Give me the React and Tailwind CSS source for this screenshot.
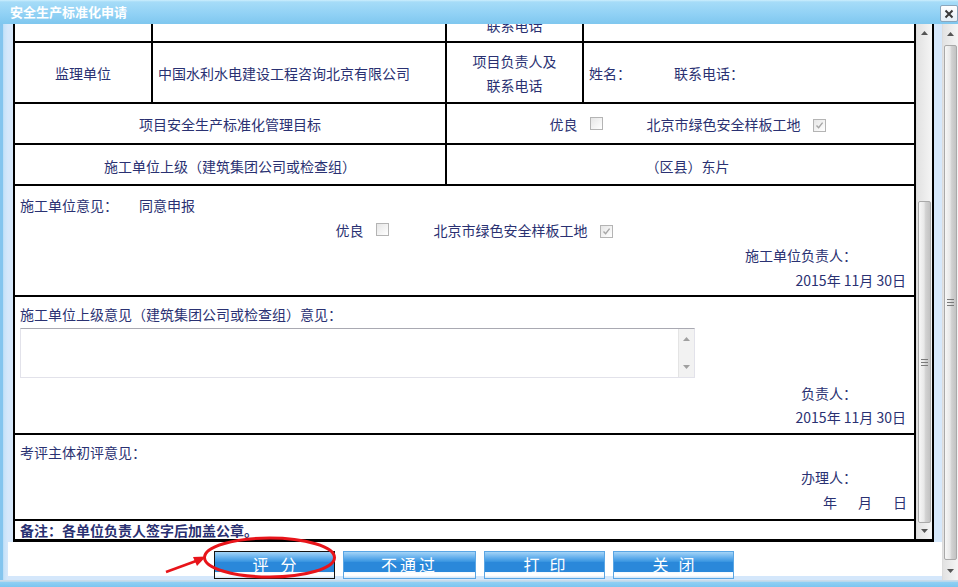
import React from 'react';

const ink = 'text-[#2a3172]';

function Checkbox({ checked }) {
  return (
    <span className="inline-flex w-[13px] h-[13px] border border-[#b4b4b4] bg-gradient-to-br from-[#e6e6e6] to-white items-center justify-center">
      {checked && (
        <svg width="9" height="9" viewBox="0 0 9 9">
          <path d="M1.5 4.6 L3.6 6.8 L7.6 1.6" fill="none" stroke="#a6a6a6" strokeWidth="1.4" />
        </svg>
      )}
    </span>
  );
}

function Arrow({ up }) {
  return (
    <svg width="7" height="4" viewBox="0 0 7 4">
      <path d={up ? 'M0 4 L3.5 0 L7 4 Z' : 'M0 0 L3.5 4 L7 0 Z'} fill="#555" />
    </svg>
  );
}

function Grip() {
  return (
    <div className="flex flex-col gap-[2px]">
      <span className="block w-[7px] h-px bg-[#7a7a7a]" />
      <span className="block w-[7px] h-px bg-[#7a7a7a]" />
      <span className="block w-[7px] h-px bg-[#7a7a7a]" />
    </div>
  );
}

// classic scrollbar: up button, spacer, thumb, spacer, down button
function ScrollBar({ upH, before, thumb, after, downH }) {
  return (
    <div className="w-[16px] h-full flex flex-col bg-[linear-gradient(90deg,#e2e2e2,#f5f5f5)] border-l border-[#dcdcdc]">
      <div className="flex items-center justify-center" style={{ height: upH }}>
        <Arrow up />
      </div>
      <div style={{ height: before }} />
      <div
        className="mx-[1px] rounded-[2px] border border-[#a9a9a9] bg-[linear-gradient(90deg,#f7f7f7,#e8e8e8_45%,#d2d2d2_60%,#c2c2c2)] flex items-center justify-center"
        style={{ height: thumb }}
      >
        <Grip />
      </div>
      <div style={{ height: after }} />
      <div className="flex items-center justify-center" style={{ height: downH }}>
        <Arrow />
      </div>
    </div>
  );
}

function Btn({ children, focused, wide, className = '' }) {
  return (
    <div
      className={`h-[28px] ${wide ? 'w-[133px]' : 'w-[121px]'} border ${
        focused ? 'border-[#141414]' : 'border-[#5aa6e4]'
      } bg-[linear-gradient(180deg,#a4d4f7_0%,#62aeec_22%,#3d98e2_36%,#2a88da_40%,#2a88da_76%,#ffffff_79%,#ffffff_90%,#cfe4f8_100%)] flex items-center justify-center pb-[3px] text-white text-[16px] ${className}`}
    >
      {children}
    </div>
  );
}

export default function App() {
  return (
    <div className={`relative w-[958px] h-[587px] overflow-hidden bg-white font-['Liberation_Sans','Noto_Sans_CJK_SC',sans-serif] text-[14px] ${ink}`}>
      {/* Title bar */}
      <div className="h-[24px] flex items-center bg-[linear-gradient(180deg,#cdeefd_0%,#a6dcf8_8%,#92d2f5_55%,#7fc7ef_100%)]">
        <span className="pl-[10px] text-white font-bold text-[13px] font-['Noto_Sans_CJK_SC',sans-serif]">安全生产标准化申请</span>
        <div className="ml-auto mt-[3px] w-[18px] h-[17px] rounded-[2px] border border-[#8aa6bc] bg-[linear-gradient(180deg,#ffffff,#e4eef6)] flex items-center justify-center">
          <svg width="10" height="10" viewBox="0 0 10 10">
            <path d="M1.5 1.5 L8.5 8.5 M8.5 1.5 L1.5 8.5" stroke="#3a3a3a" strokeWidth="2" />
          </svg>
        </div>
      </div>

      {/* Body */}
      <div className="h-[556px] flex">
        <div className="w-[8px] bg-[linear-gradient(90deg,#84c5ee_0%,#84c5ee_35%,#c6e2f8_45%,#d6e8fb_100%)]" />

        <div className="w-[934px] flex flex-col">
          <div className="h-[518px] flex">
            <div className="w-[5px] bg-[#d6e8fb]" />
            <div className="w-[921px] flex border-l-2 border-r-2 border-b-[3px] border-black">
              {/* form table */}
              <div className="w-[901px] flex flex-col font-['Noto_Sans_CJK_SC',sans-serif]">
                {/* partially scrolled row */}
                <div className="h-[19px] flex border-b-2 border-black">
                  <div className="w-[138px] border-r-2 border-black" />
                  <div className="w-[294px] border-r-2 border-black" />
                  <div className="w-[137px] border-r-2 border-black overflow-hidden flex items-end justify-center pb-[7px]">
                    <span className="leading-[18px]">联系电话</span>
                  </div>
                  <div className="flex-1 border-r-2 border-black" />
                </div>

                <div className="h-[61px] flex border-b-2 border-black">
                  <div className="w-[138px] border-r-2 border-black flex items-center justify-center pt-[2px]">监理单位</div>
                  <div className="w-[294px] border-r-2 border-black flex items-center pl-[5px] pt-[2px]">
                    中国水利水电建设工程咨询北京有限公司
                  </div>
                  <div className="w-[137px] border-r-2 border-black flex flex-col items-center justify-center leading-[24px]">
                    <span>项目负责人及</span>
                    <span>联系电话</span>
                  </div>
                  <div className="flex-1 border-r-2 border-black flex items-center pl-[5px] pt-[2px]">
                    <span>姓名：</span>
                    <span className="ml-[43px]">联系电话：</span>
                  </div>
                </div>

                <div className="h-[41px] flex border-b-2 border-black">
                  <div className="w-[432px] border-r-2 border-black flex items-center justify-center pt-[1px]">
                    项目安全生产标准化管理目标
                  </div>
                  <div className="flex-1 border-r-2 border-black flex items-center justify-center pl-[14px] pt-[1px]">
                    <span>优良</span>
                    <span className="ml-[12px]"><Checkbox /></span>
                    <span className="ml-[44px]">北京市绿色安全样板工地</span>
                    <span className="ml-[12px]"><Checkbox checked /></span>
                  </div>
                </div>

                <div className="h-[41px] flex border-b-2 border-black">
                  <div className="w-[432px] border-r-2 border-black flex items-center justify-center pt-[3px]">
                    施工单位上级（建筑集团公司或检查组）
                  </div>
                  <div className="flex-1 border-r-2 border-black flex items-center justify-center pl-[14px] pt-[3px]">
                    （区县）东片
                  </div>
                </div>

                <div className="h-[111px] border-b-2 border-r-2 border-black flex flex-col pt-[7px] pl-[5px]">
                  <div className="h-[25px] flex items-center">
                    <span>施工单位意见：</span>
                    <span className="ml-[21px]">同意申报</span>
                  </div>
                  <div className="h-[25px] flex items-center justify-center pl-[14px]">
                    <span>优良</span>
                    <span className="ml-[12px]"><Checkbox /></span>
                    <span className="ml-[45px]">北京市绿色安全样板工地</span>
                    <span className="ml-[12px]"><Checkbox checked /></span>
                  </div>
                  <div className="h-[25px] flex items-center justify-end pr-[57px]">施工单位负责人：</div>
                  <div className="h-[25px] flex items-center justify-end pr-[8px]">2015年 11月 30日</div>
                </div>

                <div className="h-[138px] border-b-2 border-r-2 border-black flex flex-col pt-[5px] pl-[5px]">
                  <div className="h-[25px] flex items-center">施工单位上级意见（建筑集团公司或检查组）意见：</div>
                  <div className="mt-[1px] w-[675px] h-[50px] flex border border-[#e2e2ea] border-t-[#a9a9b2]">
                    <div className="flex-1" />
                    <div className="w-[16px] bg-[#f2f2f2] border-l border-[#e4e4e4] flex flex-col items-center justify-between py-[8px]">
                      <svg width="7" height="4" viewBox="0 0 7 4"><path d="M0 4 L3.5 0 L7 4 Z" fill="#a0a0a0" /></svg>
                      <svg width="7" height="4" viewBox="0 0 7 4"><path d="M0 0 L3.5 4 L7 0 Z" fill="#a0a0a0" /></svg>
                    </div>
                  </div>
                  <div className="mt-[3px] h-[24px] flex items-center justify-end pr-[57px]">负责人：</div>
                  <div className="h-[24px] flex items-center justify-end pr-[8px]">2015年 11月 30日</div>
                </div>

                <div className="h-[86px] border-b-2 border-r-2 border-black flex flex-col pt-[5px] pl-[5px]">
                  <div className="h-[25px] flex items-center">考评主体初评意见：</div>
                  <div className="h-[25px] flex items-center justify-end pr-[57px]">办理人：</div>
                  <div className="h-[25px] flex items-center justify-end pr-[7px]">
                    <span>年</span>
                    <span className="ml-[21px]">月</span>
                    <span className="ml-[21px]">日</span>
                  </div>
                </div>

                <div className="h-[18px] border-r-2 border-black flex items-center pl-[5px] font-bold leading-[18px]">
                  备注：各单位负责人签字后加盖公章。
                </div>
              </div>

              <ScrollBar upH={17} before={160} thumb={322} after={0} downH={16} />
            </div>
            <div className="w-[8px] bg-[#d6e8fb]" />
          </div>

          {/* buttons */}
          <div className="h-[38px] flex items-start gap-[8px] pt-[9px] pl-[206px] bg-[linear-gradient(180deg,#ffffff_0%,#ffffff_89%,#d4e7fb_89%,#d4e7fb_100%)] font-['Noto_Sans_CJK_SC',sans-serif]">
            <Btn focused>
              <span>评</span>
              <span className="ml-[12px]">分</span>
            </Btn>
            <Btn wide className="tracking-[3px]">不通过</Btn>
            <Btn>
              <span>打</span>
              <span className="ml-[10px]">印</span>
            </Btn>
            <Btn>
              <span>关</span>
              <span className="ml-[10px]">闭</span>
            </Btn>
          </div>
        </div>

        <ScrollBar upH={19} before={2} thumb={515} after={2} downH={18} />
      </div>

      {/* window bottom edge */}
      <div className="h-[7px] bg-[linear-gradient(180deg,#c9dbe9_0%,#c9dbe9_18%,#8fd0f4_30%,#7cc5ef_100%)]" />

      {/* red annotation over the first button */}
      <svg className="absolute left-0 top-0 pointer-events-none" width="958" height="587" viewBox="0 0 958 587">
        <ellipse cx="269.5" cy="557.5" rx="65" ry="19.5" fill="none" stroke="#e8141a" strokeWidth="3" />
        <line x1="166" y1="572" x2="196" y2="561" stroke="#e8141a" strokeWidth="2.5" />
        <path d="M206 556.5 L193 557 L197 566 Z" fill="#e8141a" />
      </svg>
    </div>
  );
}
